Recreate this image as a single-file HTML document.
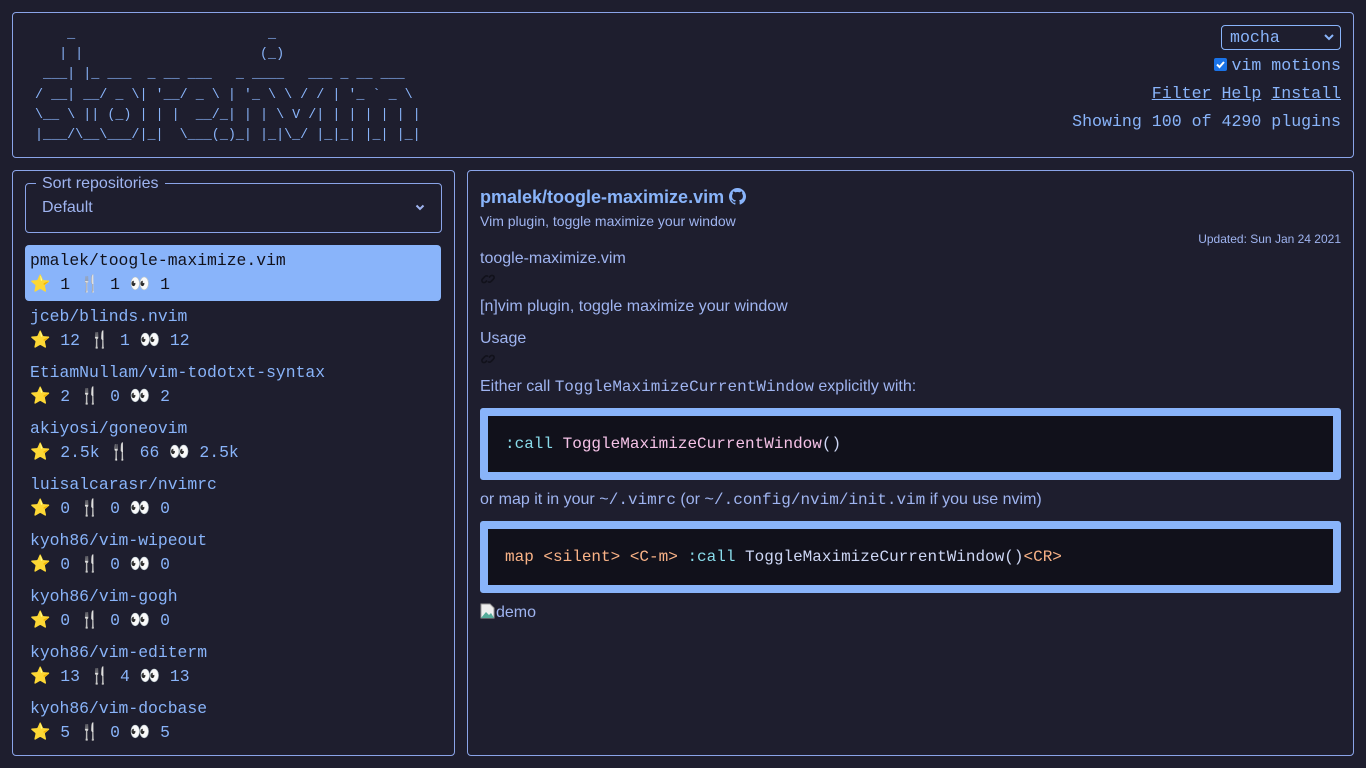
<!DOCTYPE html>
<html><head><meta charset="utf-8"><style>
*{box-sizing:border-box;margin:0;padding:0}
body{width:1366px;height:768px;background:#1e1e2e;color:#9fb4f0;font-family:"Liberation Sans",sans-serif;position:relative;overflow:hidden}
.box{position:absolute;border:1px solid #8aa4e8;border-radius:4px}
.mono{font-family:"Liberation Mono","DejaVu Sans Mono",monospace}
pre.ascii{position:absolute;left:35px;top:25px;font-size:13.4px;line-height:20.2px;color:#89b4fa}
.right{position:absolute;right:25px;text-align:right;font-size:16.6px;color:#89b4fa}
a{color:#89b4fa;text-decoration:underline}
.item{position:absolute;left:25px;width:416px;height:56px;padding:4px 5px;font-size:16.4px;line-height:24px;color:#89b4fa}
.sel{background:#89b4fa;color:#11111b;border-radius:4px}
.p{position:absolute;left:480px;font-size:16px;color:#9fb4f0}
.code{position:absolute;left:480px;width:861px;height:72px;border:8px solid #89b4fa;border-radius:3px;background:#11111b;padding:0 17px;font-size:16px;line-height:56px;color:#cdd6f4}
</style></head><body>
<div class="box" style="left:12px;top:12px;width:1342px;height:146px"></div>
<pre class="ascii mono">    _                        _
   | |                      (_)
 ___| |_ ___  _ __ ___   _ ____   ___ _ __ ___
/ __| __/ _ \| '__/ _ \ | '_ \ \ / / | '_ ` _ \
\__ \ || (_) | | |  __/_| | | \ V /| | | | | | |
|___/\__\___/|_|  \___(_)_| |_|\_/ |_|_| |_| |_|</pre>
<div class="mono" style="position:absolute;left:1221px;top:25px;width:120px;height:25px;border:1px solid #89b4fa;border-radius:4px;font-size:16.6px;line-height:23px;padding-left:8px;color:#89b4fa">mocha<svg style="position:absolute;right:6px;top:8px" width="10" height="7" viewBox="0 0 10 7"><path d="M1 1l4 4 4-4" stroke="#89b4fa" stroke-width="2" fill="none"/></svg></div>
<div class="right mono" style="top:56px;line-height:20px"><span style="display:inline-block;width:13px;height:13px;background:#1a73e8;border-radius:2px;vertical-align:-1px;margin-right:4px;position:relative"><svg style="position:absolute;left:1px;top:1px" width="11" height="11" viewBox="0 0 11 11"><path d="M2 5.5l2.5 2.5 4.5-5" stroke="#fff" stroke-width="2" fill="none"/></svg></span>vim motions</div>
<div class="right mono" style="top:84px;line-height:20px"><a>Filter</a> <a>Help</a> <a>Install</a></div>
<div class="right mono" style="top:112px;line-height:20px">Showing 100 of 4290 plugins</div>

<div class="box" style="left:12px;top:170px;width:443px;height:586px"></div>
<div style="position:absolute;left:25px;top:183px;width:417px;height:50px;border:1px solid #8aa4e8;border-radius:4px"></div>
<div style="position:absolute;left:36px;top:175px;background:#1e1e2e;padding:0 6px;font-size:16px;color:#9fb4f0">Sort repositories</div>
<div style="position:absolute;left:42px;top:199px;font-size:16px;color:#9fb4f0">Default</div>
<svg style="position:absolute;left:415px;top:204px" width="10" height="7" viewBox="0 0 10 7"><path d="M1.5 1.5l3.5 3.5 3.5-3.5" stroke="#9fb4f0" stroke-width="2" fill="none"/></svg>

<div class="item mono sel" style="top:245px">pmalek/toogle-maximize.vim<br>⭐ 1 🍴 1 👀 1</div>
<div class="item mono" style="top:301px">jceb/blinds.nvim<br>⭐ 12 🍴 1 👀 12</div>
<div class="item mono" style="top:357px">EtiamNullam/vim-todotxt-syntax<br>⭐ 2 🍴 0 👀 2</div>
<div class="item mono" style="top:413px">akiyosi/goneovim<br>⭐ 2.5k 🍴 66 👀 2.5k</div>
<div class="item mono" style="top:469px">luisalcarasr/nvimrc<br>⭐ 0 🍴 0 👀 0</div>
<div class="item mono" style="top:525px">kyoh86/vim-wipeout<br>⭐ 0 🍴 0 👀 0</div>
<div class="item mono" style="top:581px">kyoh86/vim-gogh<br>⭐ 0 🍴 0 👀 0</div>
<div class="item mono" style="top:637px">kyoh86/vim-editerm<br>⭐ 13 🍴 4 👀 13</div>
<div class="item mono" style="top:693px">kyoh86/vim-docbase<br>⭐ 5 🍴 0 👀 5</div>

<div class="box" style="left:467px;top:170px;width:887px;height:586px"></div>
<div class="p" style="top:187px;font-size:18px;font-weight:bold;color:#89b4fa">pmalek/toogle-maximize.vim <svg width="17" height="17" viewBox="0 0 16 16" style="vertical-align:-2px"><path fill="#89b4fa" d="M8 0C3.6 0 0 3.6 0 8c0 3.5 2.3 6.5 5.5 7.6.4.1.5-.2.5-.4v-1.4c-2.2.5-2.7-1-2.7-1-.4-.9-.9-1.2-.9-1.2-.7-.5.1-.5.1-.5.8.1 1.2.8 1.2.8.7 1.2 1.9.9 2.300.7.1-.5.3-.9.5-1.1-1.8-.2-3.6-.9-3.6-4 0-.9.3-1.6.8-2.1-.1-.2-.4-1 .1-2.1 0 0 .7-.2 2.2.8.6-.2 1.300-.3 2-.3s1.4.1 2 .3c1.5-1 2.2-.8 2.2-.8.4 1.1.2 1.9.1 2.1.5.6.8 1.3.8 2.1 0 3.1-1.9 3.7-3.6 3.9.3.3.5.8.5 1.5v2.2c0 .2.1.5.6.4C13.700 14.5 16 11.5 16 8c0-4.4-3.6-8-8-8z"/></svg></div>
<div class="p" style="top:213px;font-size:14px">Vim plugin, toggle maximize your window</div>
<div style="position:absolute;right:25px;top:232px;font-size:12px;color:#9fb4f0">Updated: Sun Jan 24 2021</div>
<div class="p" style="top:250px">toogle-maximize.vim</div>
<svg style="position:absolute;left:480px;top:271px" width="16" height="16" viewBox="0 0 16 16"><g stroke="#11111b" stroke-width="1.6" fill="none"><path d="M7 9.5l-1.5 1.5a2 2 0 01-3-3L5 5.5a2 2 0 013 0"/><path d="M9 6.5l1.5-1.5a2 2 0 013 3L11 10.5a2 2 0 01-3 0"/></g></svg>
<div class="p" style="top:298px">[n]vim plugin, toggle maximize your window</div>
<div class="p" style="top:330px">Usage</div>
<svg style="position:absolute;left:480px;top:351px" width="16" height="16" viewBox="0 0 16 16"><g stroke="#11111b" stroke-width="1.6" fill="none"><path d="M7 9.5l-1.5 1.5a2 2 0 01-3-3L5 5.5a2 2 0 013 0"/><path d="M9 6.5l1.5-1.5a2 2 0 013 3L11 10.5a2 2 0 01-3 0"/></g></svg>
<div class="p" style="top:378px">Either call <span class="mono">ToggleMaximizeCurrentWindow</span> explicitly with:</div>
<div class="code mono" style="top:408px"><span style="color:#89dceb">:call</span> <span style="color:#f5c2e7">ToggleMaximizeCurrentWindow</span>()</div>
<div class="p" style="top:491px">or map it in your <span class="mono">~/.vimrc</span> (or <span class="mono">~/.config/nvim/init.vim</span> if you use nvim)</div>
<div class="code mono" style="top:521px"><span style="color:#fab387">map &lt;silent&gt; &lt;C-m&gt;</span> <span style="color:#89dceb">:call</span> ToggleMaximizeCurrentWindow()<span style="color:#fab387">&lt;CR&gt;</span></div>
<div class="p" style="top:603px"><svg width="16" height="16" viewBox="0 0 16 16" style="vertical-align:-2px"><path d="M1 1h9l4 4v10H1z" fill="#eee" stroke="#999"/><path d="M1 15l5-6 3 3 2-2 3 5z" fill="#5a9"/></svg>demo</div>
</body></html>
